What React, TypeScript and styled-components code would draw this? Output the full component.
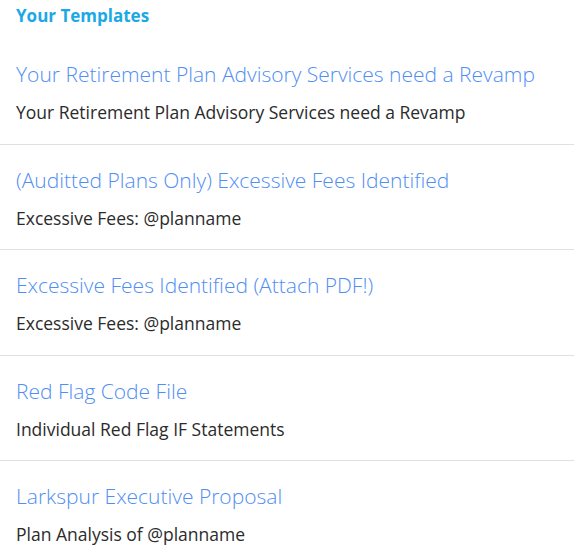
import React from "react";
import styled, { createGlobalStyle } from "styled-components";

const Global = createGlobalStyle`
  html, body { margin: 0; padding: 0; background: #ffffff; }
  body { font-family: "Open Sans", "Noto Sans", sans-serif; }
`;

const Page = styled.div`
  width: 574px;
  display: flex;
  flex-direction: column;
`;

const Heading = styled.h2`
  margin: 0;
  padding: 4px 16px 0 16px;
  font-size: 17px;
  line-height: 24px;
  font-weight: 700;
  color: #1aa9e6;
`;

const List = styled.ul`
  list-style: none;
  margin: 0;
  padding: 0;
  margin-top: 11px;
`;

const Item = styled.li<{ $last?: boolean }>`
  display: flex;
  flex-direction: column;
  gap: 11px;
  padding: 20px 16px 19.5px 16px;
  border-bottom: ${(p) => (p.$last ? "none" : "1px solid #e1dfdf")};
`;

const Title = styled.a`
  font-size: 21px;
  line-height: 30px;
  font-weight: 300;
  color: #4f8ef3;
  text-decoration: none;
  cursor: pointer;
`;

const Subtitle = styled.div`
  font-size: 17.5px;
  line-height: 24px;
  font-weight: 400;
  color: #2b2b2b;
`;

const templates = [
  {
    title: "Your Retirement Plan Advisory Services need a Revamp",
    subject: "Your Retirement Plan Advisory Services need a Revamp",
  },
  { title: "(Auditted Plans Only) Excessive Fees Identified", subject: "Excessive Fees: @planname" },
  { title: "Excessive Fees Identified (Attach PDF!)", subject: "Excessive Fees: @planname" },
  { title: "Red Flag Code File", subject: "Individual Red Flag IF Statements" },
  { title: "Larkspur Executive Proposal", subject: "Plan Analysis of @planname" },
];

export default function App() {
  return (
    <Page>
      <Global />
      <Heading>Your Templates</Heading>
      <List>
        {templates.map((t, i) => (
          <Item key={i} $last={i === templates.length - 1}>
            <Title>{t.title}</Title>
            <Subtitle>{t.subject}</Subtitle>
          </Item>
        ))}
      </List>
    </Page>
  );
}
